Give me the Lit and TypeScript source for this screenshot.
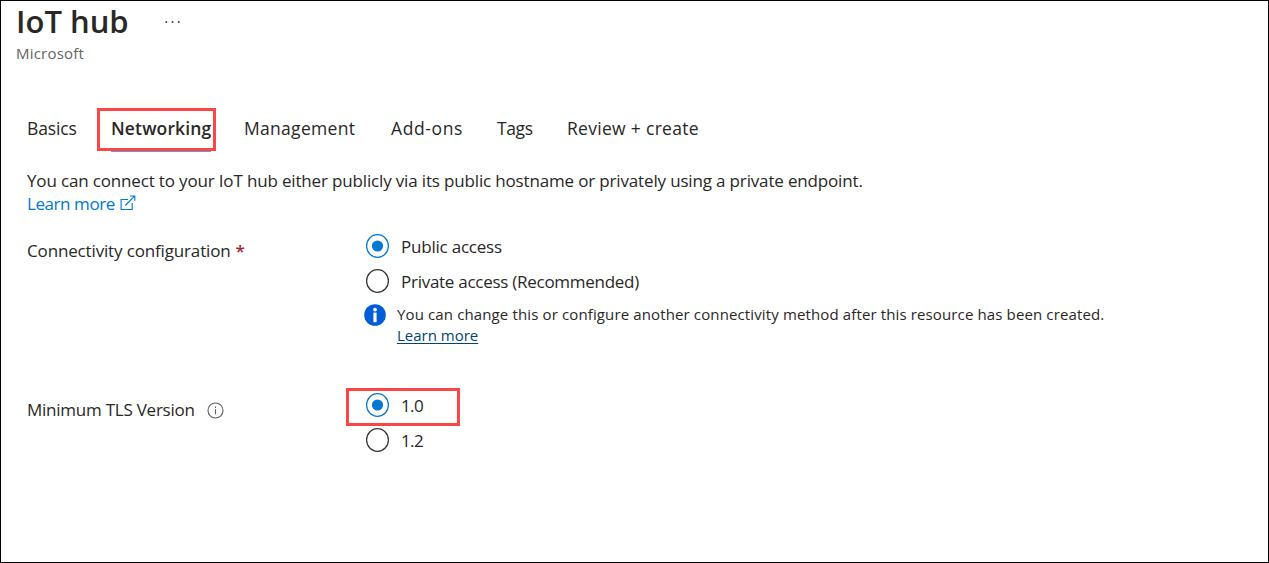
import { LitElement, html, css } from "lit";
import { customElement, property } from "lit/decorators.js";
import { classMap } from "lit/directives/class-map.js";

@customElement("radio-option")
export class RadioOption extends LitElement {
  @property() label = "";
  @property({ type: Boolean, reflect: true }) checked = false;

  static styles = css`
    :host { display: flex; align-items: center; gap: 12px; height: 24px; }
    svg { display: block; flex: none; }
    .ring { fill: #fff; stroke: #323130; stroke-width: 1.2; }
    :host([checked]) .ring { stroke: #0078d4; }
    .dot { fill: #0078d4; }
    .text { padding-top: 2px; line-height: 24px; white-space: nowrap; }
  `;

  render() {
    return html`
      <svg width="23" height="24" viewBox="0 0 23 24">
        <ellipse class="ring" cx="11.5" cy="12" rx="10.9" ry="11.3"></ellipse>
        ${this.checked
          ? html`<svg><circle class="dot" cx="11.5" cy="12" r="5.6"></circle></svg>`
          : ""}
      </svg>
      <span class="text">${this.label}</span>
    `;
  }
}

const tabs = [
  { id: "basics", label: "Basics" },
  { id: "networking", label: "Networking" },
  { id: "management", label: "Management" },
  { id: "addons", label: "Add-ons" },
  { id: "tags", label: "Tags" },
  { id: "review", label: "Review + create" },
];

@customElement("app-root")
export class AppRoot extends LitElement {
  static styles = css`
    :host {
      display: block;
      box-sizing: border-box;
      height: 563px;
      border: 1px solid #000;
      background: #fff;
      color: #292827;
      font-family: "Open Sans", "Noto Sans", sans-serif;
      font-size: 17px;
      overflow: hidden;
    }
    svg { display: block; flex: none; }
    header { padding-left: 15px; }
    .title-row { display: flex; gap: 36px; height: 40px; }
    h1 { margin: 0; font-size: 31px; line-height: 40px; font-weight: 600; letter-spacing: 0; white-space: nowrap; }
    .more { margin-top: 19px; }
    .publisher { margin-top: 2px; font-size: 15px; line-height: 20px; letter-spacing: 0.22px; color: #666462; }

    nav { display: grid; grid-template-columns: 84px 133px 147px 106px 70px 160px; margin: 53px 0 0 26px; height: 36px; font-size: 17.5px; line-height: 24px; letter-spacing: 0.3px; white-space: nowrap; }
    .tab { position: relative; height: 35px; justify-self: start; }
    .basics { letter-spacing: -0.15px; }
    .networking { letter-spacing: 0.15px; }
    .addons { letter-spacing: 0.6px; }
    .tags { letter-spacing: -0.4px; }
    .active { font-weight: 600; border-bottom: 1px solid #5f9ed6; }
    .mark { position: absolute; box-sizing: border-box; border: 3px solid #fa4646; pointer-events: none; }
    .mark-tab { left: -14px; top: -8px; width: 119px; height: 43px; }
    .mark-tls { left: -20px; top: -5px; width: 114px; height: 38px; }

    .intro { margin: 17px 0 0 26px; line-height: 23px; letter-spacing: -0.16px; white-space: nowrap; }
    .link { display: flex; gap: 5px; color: #0078d4; letter-spacing: -0.43px; }
    .external { margin-top: 3px; }

    .field { display: grid; grid-template-columns: 339px 1fr; margin-left: 26px; white-space: nowrap; }
    .connectivity { margin-top: 19px; }
    .label { display: flex; margin-top: 5px; line-height: 24px; letter-spacing: -0.15px; }
    .required { margin-left: 5px; color: #a4262c; font-weight: 600; }
    .options { display: grid; gap: 11px; align-content: start; }
    .public { letter-spacing: -0.22px; }
    .private { letter-spacing: -0.27px; }
    .version { letter-spacing: -0.6px; }
    .marked { position: relative; }
    .notice { display: flex; gap: 11px; margin-left: -2px; font-size: 15px; line-height: 21px; letter-spacing: 0.13px; }
    .notice-link { color: #004578; letter-spacing: 0; text-decoration: underline; text-underline-offset: 2px; text-decoration-thickness: 1px; }
    .tls { margin-top: 47px; }
    .tls .label { letter-spacing: -0.24px; gap: 12px; }
    .hint { margin-top: 4px; }
  `;

  render() {
    return html`
      <header>
        <div class="title-row">
          <h1>IoT hub</h1>
          <svg class="more" width="16" height="4" viewBox="0 0 16 4" fill="#444">
            <circle cx="1.3" cy="2" r="1"></circle><circle cx="7.5" cy="2" r="1"></circle><circle cx="13.7" cy="2" r="1"></circle>
          </svg>
        </div>
        <div class="publisher">Microsoft</div>
      </header>

      <nav>
        ${tabs.map((t) => {
          const active = t.id === "networking";
          return html`<div class=${classMap({ tab: true, [t.id]: true, active })}>
            ${t.label}${active ? html`<i class="mark mark-tab"></i>` : ""}
          </div>`;
        })}
      </nav>

      <div class="intro">
        You can connect to your IoT hub either publicly via its public hostname or privately using a private endpoint.
        <div class="link">
          Learn more
          <svg class="external" width="16" height="16" viewBox="0 0 16 16" fill="none" stroke="#0078d4" stroke-width="1.1">
            <path d="M8 4.5H1.1V14.5H12.2V8"></path>
            <path d="M5.3 10.5L14.5 1.2M10 1H14.8V5.8"></path>
          </svg>
        </div>
      </div>

      <section class="field connectivity">
        <div class="label">Connectivity configuration<span class="required">*</span></div>
        <div class="options">
          <radio-option class="public" label="Public access" checked></radio-option>
          <radio-option class="private" label="Private access (Recommended)"></radio-option>
          <div class="notice">
            <svg width="22" height="22" viewBox="0 0 22 22">
              <circle cx="11" cy="11" r="10.8" fill="#015cda"></circle>
              <circle cx="11" cy="5.6" r="1.9" fill="#fff"></circle>
              <rect x="9.4" y="8.6" width="3.2" height="9.6" fill="#fff"></rect>
            </svg>
            <div>
              You can change this or configure another connectivity method after this resource has been created.<br />
              <span class="notice-link">Learn more</span>
            </div>
          </div>
        </div>
      </section>

      <section class="field tls">
        <div class="label">
          Minimum TLS Version
          <svg class="hint" width="17" height="17" viewBox="0 0 17 17" fill="none" stroke="#605e5c">
            <circle cx="8.5" cy="8.5" r="7.5" stroke-width="1.1"></circle>
            <path d="M8.5 7.2V12.2M8.5 4.6V6" stroke-width="1.1"></path>
          </svg>
        </div>
        <div class="options">
          <div class="marked">
            <radio-option class="version" label="1.0" checked></radio-option>
            <i class="mark mark-tls"></i>
          </div>
          <radio-option class="version" label="1.2"></radio-option>
        </div>
      </section>
    `;
  }
}
